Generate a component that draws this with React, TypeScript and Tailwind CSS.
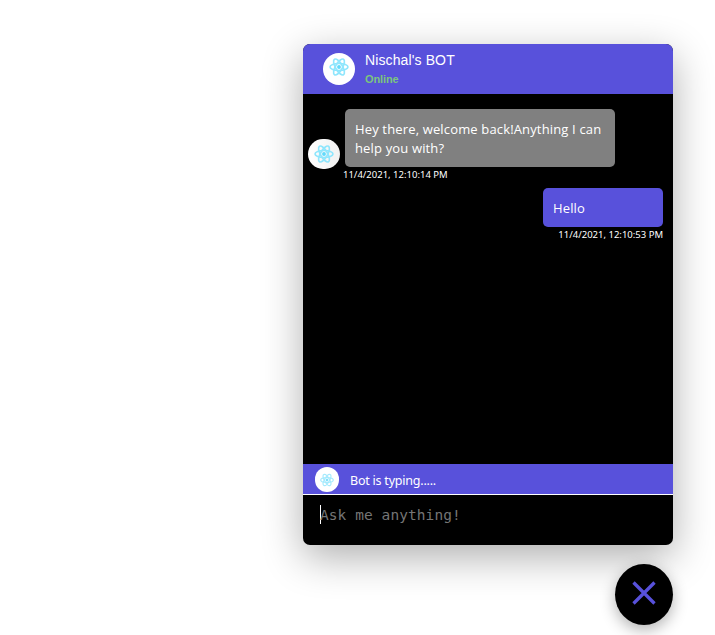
type LogoProps = { className: string };

function ReactLogo({ className }: LogoProps) {
  return (
    <svg viewBox="-12 -12 24 24" className={className} fill="none" stroke="#8fe6fd" strokeWidth="2">
      <ellipse rx="10.8" ry="4.2" />
      <ellipse rx="10.8" ry="4.2" transform="rotate(60)" />
      <ellipse rx="10.8" ry="4.2" transform="rotate(120)" />
      <circle r="2.3" fill="#61dafb" stroke="none" />
    </svg>
  );
}

function Header() {
  return (
    <header className="flex h-[50px] shrink-0 bg-[#5851db] pl-5 pt-[9px]">
      <div className="flex size-8 justify-center rounded-full bg-white pt-[4px]">
        <ReactLogo className="size-5" />
      </div>
      <div className="ml-[10px] -mt-[2px] font-['Liberation_Sans',Arial,sans-serif]">
        <div className="h-[18px] text-[14px] leading-[18px] tracking-[0.12px] text-white">Nischal's BOT</div>
        <div className="mt-[3px] text-[11px] font-bold leading-[14px] tracking-[-0.1px] text-[#7cc47f]">Online</div>
      </div>
    </header>
  );
}

function Messages() {
  return (
    <main className="h-[370px] shrink-0 pt-[15px] text-white">
      <div className="flex pl-[5px]">
        <div className="mt-[30px] flex h-[30px] w-8 items-center justify-center rounded-full bg-linear-to-r from-white to-[#f1f1f1]">
          <ReactLogo className="size-5" />
        </div>
        <div className="ml-[5px]">
          <p className="h-[58px] w-[270px] whitespace-nowrap rounded-[5px] bg-[#808080] pl-[10px] pt-[11px] font-['Open_Sans',sans-serif] text-[13px] leading-[19px] tracking-[0.15px]">
            Hey there, welcome back!Anything I can
            <br />
            help you with?
          </p>
          <time className="-ml-[2px] block h-[15px] whitespace-nowrap text-[9.5px] leading-[15px]">11/4/2021, 12:10:14 PM</time>
        </div>
      </div>
      <div className="mt-[6px] flex flex-col items-end pr-[10px]">
        <p className="h-[39px] w-[120px] rounded-[5px] bg-[#5851db] pl-[10px] pt-[11px] font-['Open_Sans',sans-serif] text-[13px] leading-[19px] tracking-[0.15px]">Hello</p>
        <time className="block h-[15px] whitespace-nowrap text-[9.5px] leading-[15px]">11/4/2021, 12:10:53 PM</time>
      </div>
    </main>
  );
}

function Footer() {
  return (
    <footer>
      <div className="flex h-[30px] bg-[#5851db] pl-[12px] pt-[3px] text-white">
        <div className="flex h-[25px] w-6 items-center justify-center rounded-full bg-white">
          <ReactLogo className="size-[14px] opacity-80" />
        </div>
        <span className="ml-[11px] pt-[4px] text-[12.5px] leading-[19px] tracking-[-0.22px]">Bot is typing.....</span>
      </div>
      <div className="flex h-[51px] border-t border-white pl-[17px] pt-[10px]">
        <span className="h-[19px] w-px bg-white" />
        <span className="-ml-px whitespace-nowrap font-['DejaVu_Sans_Mono',monospace] text-[14.5px] leading-[21px] tracking-[0.07px] text-[#757575]">Ask me anything!</span>
      </div>
    </footer>
  );
}

export default function App() {
  return (
    <div className="h-[635px] w-[715px] overflow-hidden bg-white pl-[303px] pt-[44px] font-['Noto_Sans','Open_Sans',sans-serif]">
      <section className="flex h-[501px] w-[370px] flex-col overflow-hidden rounded-[7px] bg-black shadow-[0_12px_40px_rgba(0,0,0,0.32)]">
        <Header />
        <Messages />
        <Footer />
      </section>
      <div className="mt-[19px] flex w-[370px] justify-end">
        <button className="flex h-[61px] w-[58px] items-center justify-center rounded-[50%] bg-black shadow-[0_5px_15px_rgba(0,0,0,0.3)]">
          <svg viewBox="0 0 24 24" className="-mt-[3px] size-6" stroke="#5851db" strokeWidth="3.3">
            <path d="M1.5 1.5 22.5 22.5M22.5 1.5 1.5 22.5" />
          </svg>
        </button>
      </div>
    </div>
  );
}
